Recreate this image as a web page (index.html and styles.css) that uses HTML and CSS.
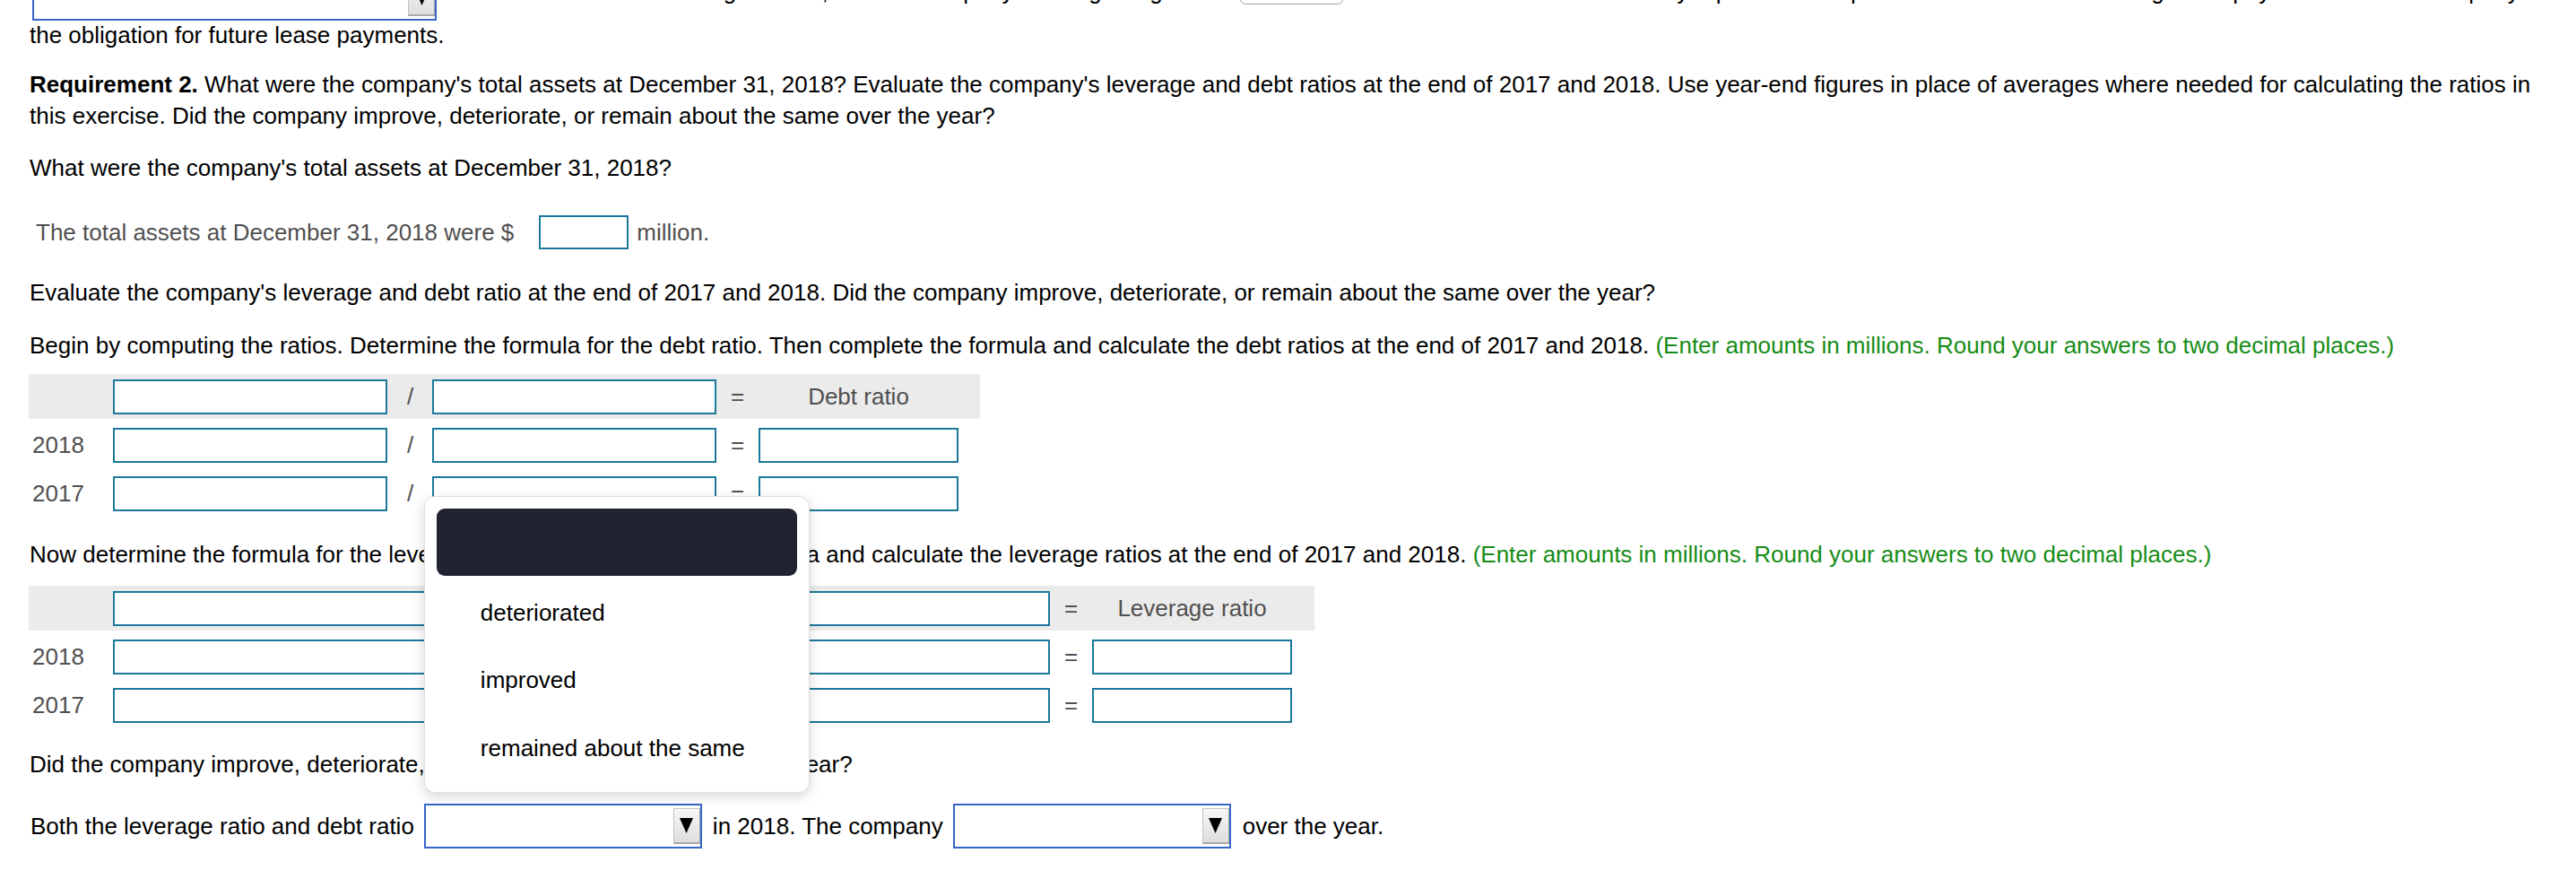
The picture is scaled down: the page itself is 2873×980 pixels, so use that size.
FILE: index.html
```html
<!DOCTYPE html>
<html lang="en">
<head>
<meta charset="utf-8">
<title>Requirement 2</title>
<link rel="stylesheet" href="styles.css">
</head>
<body>
<div class="page">
  <div class="toprow">
    <span class="sel sel-wide"><span class="selbtn"><svg viewBox="0 0 15 17" width="15" height="17"><polygon points="0,0 15,0 7.5,17" fill="#000"/></svg></span></span>
    <span class="cut cut-a">recorded under the lease agreement, and the company is recognizing a liability</span>
    <span class="pill"></span>
    <span class="cut">on its balance sheet. The liability represents the present value of the remaining lease payments and the company's right to use the asset, along with</span>
  </div>
  <p class="t obl">the obligation for future lease payments.</p>

  <p class="t req"><b>Requirement 2.</b> What were the company's total assets at December 31, 2018? Evaluate the company's leverage and debt ratios at the end of 2017 and 2018. Use year-end figures in place of averages where needed for calculating the ratios in this exercise. Did the company improve, deteriorate, or remain about the same over the year?</p>

  <p class="t what">What were the company's total assets at December 31, 2018?</p>

  <div class="assets">
    <span class="gray">The total assets at December 31, 2018 were $</span>
    <span class="inp inp-assets"></span>
    <span class="gray">million.</span>
  </div>

  <p class="t eval">Evaluate the company's leverage and debt ratio at the end of 2017 and 2018. Did the company improve, deteriorate, or remain about the same over the year?</p>

  <p class="t begin">Begin by computing the ratios. Determine the formula for the debt ratio. Then complete the formula and calculate the debt ratios at the end of 2017 and 2018. <span class="green">(Enter amounts in millions. Round your answers to two decimal places.)</span></p>

  <table class="calc debt">
    <tr class="head">
      <td class="lab"></td>
      <td class="c-in1"><span class="inp w306"></span></td>
      <td class="op">/</td>
      <td class="c-in2"><span class="inp w317"></span></td>
      <td class="op eq">=</td>
      <td class="res">Debt ratio</td>
      <td class="pad"></td>
    </tr>
    <tr>
      <td class="lab">2018</td>
      <td class="c-in1"><span class="inp w306"></span></td>
      <td class="op">/</td>
      <td class="c-in2"><span class="inp w317"></span></td>
      <td class="op eq">=</td>
      <td class="res"><span class="inp w223"></span></td>
      <td class="pad"></td>
    </tr>
    <tr>
      <td class="lab">2017</td>
      <td class="c-in1"><span class="inp w306"></span></td>
      <td class="op">/</td>
      <td class="c-in2"><span class="inp w317"></span></td>
      <td class="op eq">=</td>
      <td class="res"><span class="inp w223"></span></td>
      <td class="pad"></td>
    </tr>
  </table>

  <p class="t now">Now determine the formula for the leverage ratio. Then complete the formula and calculate the leverage ratios at the end of 2017 and 2018. <span class="green">(Enter amounts in millions. Round your answers to two decimal places.)</span></p>

  <table class="calc lev">
    <tr class="head">
      <td class="lab"></td>
      <td class="c-in1w"><span class="inp w497"></span></td>
      <td class="op">/</td>
      <td class="c-in2w"><span class="inp w498"></span></td>
      <td class="op eq">=</td>
      <td class="res">Leverage ratio</td>
      <td class="pad2"></td>
    </tr>
    <tr>
      <td class="lab">2018</td>
      <td class="c-in1w"><span class="inp w497"></span></td>
      <td class="op">/</td>
      <td class="c-in2w"><span class="inp w498"></span></td>
      <td class="op eq">=</td>
      <td class="res"><span class="inp w223"></span></td>
      <td class="pad2"></td>
    </tr>
    <tr>
      <td class="lab">2017</td>
      <td class="c-in1w"><span class="inp w497"></span></td>
      <td class="op">/</td>
      <td class="c-in2w"><span class="inp w498"></span></td>
      <td class="op eq">=</td>
      <td class="res"><span class="inp w223"></span></td>
      <td class="pad2"></td>
    </tr>
  </table>

  <p class="t did">Did the company improve, deteriorate, or remain about the same over the year?</p>

  <div class="both">
    <span>Both the leverage ratio and debt ratio</span>
    <span class="selwrap">
      <span class="sel sel-std"><span class="selbtn"><svg viewBox="0 0 15 17" width="15" height="17"><polygon points="0,0 15,0 7.5,17" fill="#000"/></svg></span></span>
      <span class="popup">
        <span class="opt-sel"></span>
        <span class="opt opt-first">deteriorated</span>
        <span class="opt">improved</span>
        <span class="opt">remained about the same</span>
      </span>
    </span>
    <span>in 2018. The company</span>
    <span class="sel sel-std sel-2"><span class="selbtn"><svg viewBox="0 0 15 17" width="15" height="17"><polygon points="0,0 15,0 7.5,17" fill="#000"/></svg></span></span>
    <span>over the year.</span>
  </div>
</div>
</body>
</html>
```

FILE: styles.css
```css
html, body {
  margin: 0;
  padding: 0;
  background: #fff;
}

body {
  font-family: "Liberation Sans", Arial, Helvetica, sans-serif;
  font-size: 26px;
  color: #000;
  overflow: hidden;
}

.page {
  width: 2807px;
  padding-left: 33px;
}

.t {
  margin: 0;
  line-height: 28px;
}

/* clipped first row (only its bottom edge is visible) */
.toprow {
  display: flex;
  align-items: center;
  height: 50px;
  margin-top: -27px;
  white-space: nowrap;
  overflow: hidden;
  gap: 9px;
}

.cut {
  position: relative;
  top: -8px;
}

.cut-a {
  display: block;
  width: 877px;
  overflow: hidden;
  flex: none;
}

.pill {
  align-self: flex-start;
  width: 115px;
  height: 30px;
  border: 1px solid #9aa3ad;
  border-radius: 0 0 8px 8px;
  flex: none;
}

.obl { margin-top: 2px; }
.req { margin-top: 24px; line-height: 35px; }
.what { margin-top: 26px; }

.assets {
  display: flex;
  align-items: center;
  height: 38px;
  margin-top: 39px;
  padding-left: 7px;
}

.gray { color: #505050; }

.inp {
  display: block;
  box-sizing: border-box;
  height: 39px;
  border: 2px solid #1b789b;
  background: #fff;
}

.inp-assets {
  width: 100px;
  height: 38px;
  margin: 0 9px 0 28px;
}

.eval { margin-top: 34px; }
.begin { margin-top: 31px; }

.green { color: #168c16; }

/* ratio tables */
.calc {
  border-collapse: collapse;
  margin-left: -1px;
  color: #505050;
}

.calc td {
  padding: 10px 0 5px;
  line-height: 39px;
  height: 39px;
  vertical-align: top;
}

.calc tr.head td {
  background: #ebebeb;
  padding: 6px 0 5px;
}

.debt { margin-top: 18px; }
.lev { margin-top: 21px; }

.lab { width: 90px; padding-left: 4px !important; }
.c-in1 { width: 307px; }
.c-in2 { width: 317px; }
.c-in1w { width: 498px; }
.c-in2w { width: 498px; }
.op { width: 49px; text-align: center; }
.eq { width: 47px; }
.res { width: 223px; text-align: center; }
.pad { width: 24px; }
.pad2 { width: 25px; }

.w306 { width: 306px; }
.w317 { width: 317px; }
.w223 { width: 223px; }
.w497 { width: 497px; }
.w498 { width: 498px; }

.now { margin-top: 29px; }
.did { margin-top: 27px; }

/* selects */
.both {
  display: flex;
  align-items: center;
  height: 50px;
  margin-top: 30px;
  margin-left: 1px;
}

.sel {
  box-sizing: border-box;
  display: flex;
  justify-content: flex-end;
  align-items: stretch;
  height: 50px;
  border: 2px solid #3866c6;
  background: #fff;
  padding: 3px 0;
  flex: none;
}

.sel-wide {
  width: 451px;
  margin-left: 3px;
}

.sel-std { width: 310px; }

.selwrap {
  position: relative;
  display: block;
  margin: 0 12px 0 11px;
}

.sel-2 { margin: 0 13px 0 11px; }

.selbtn {
  box-sizing: border-box;
  width: 30px;
  display: flex;
  align-items: center;
  justify-content: center;
  background: linear-gradient(#f6f6f6, #dedede);
  border: 1px solid #c4c4c4;
  border-right-color: #a8a8a8;
  border-bottom: 2px solid #a8a8a8;
}

.popup {
  position: absolute;
  left: 0;
  bottom: calc(100% + 12px);
  box-sizing: border-box;
  width: 430px;
  padding: 13px 13px 11px;
  background: #fff;
  border: 1px solid #dedede;
  border-radius: 12px;
  box-shadow: 0 4px 14px rgba(0, 0, 0, 0.16);
  display: flex;
  flex-direction: column;
  color: #000;
  z-index: 5;
}

.opt-sel {
  height: 75px;
  background: #1f2430;
  border-radius: 9px;
}

.opt {
  display: flex;
  align-items: center;
  height: 75.5px;
  padding-left: 49px;
  white-space: nowrap;
}

.opt-first { margin-top: 4px; }
```
